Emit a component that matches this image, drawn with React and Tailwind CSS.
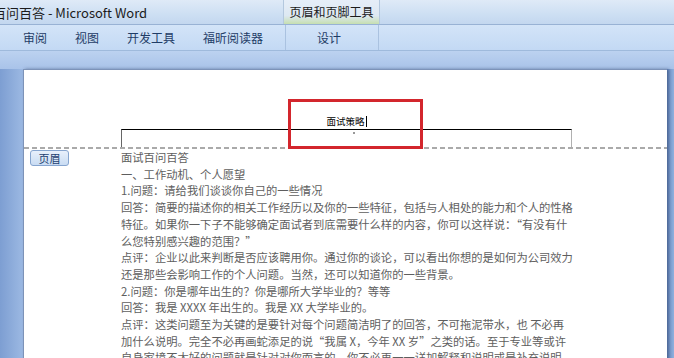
import React from "react";

const lines = [
  "面试百问百答",
  "一、工作动机、个人愿望",
  "1.问题：请给我们谈谈你自己的一些情况",
  "回答：简要的描述你的相关工作经历以及你的一些特征，包括与人相处的能力和个人的性格",
  "特征。如果你一下子不能够确定面试者到底需要什么样的内容，你可以这样说：“有没有什",
  "么您特别感兴趣的范围？”",
  "点评：企业以此来判断是否应该聘用你。通过你的谈论，可以看出你想的是如何为公司效力",
  "还是那些会影响工作的个人问题。当然，还可以知道你的一些背景。",
  "2.问题：你是哪年出生的？你是哪所大学毕业的？等等",
  "回答：我是 XXXX 年出生的。我是 XX 大学毕业的。",
  "点评：这类问题至为关键的是要针对每个问题简洁明了的回答，不可拖泥带水，也 不必再",
  "加什么说明。完全不必再画蛇添足的说“我属 X，今年 XX 岁”之类的话。至于专业等或许",
  "自身家境不太好的问题就是针对对你而言的，你不必再一一详加解释和说明或是补充说明。",
];

export default function App() {
  return (
    <div
      className="w-[674px] h-[358px] overflow-hidden flex flex-col bg-[#a3bfe6]"
      style={{ fontFamily: '"Noto Sans CJK SC", "Noto Sans", sans-serif' }}
    >
      {/* Title bar */}
      <div className="h-[25px] flex shrink-0 bg-[linear-gradient(to_bottom,#dfeaf7,#cddff3_60%,#c3d7ef)] border-b border-[#98b2d4]">
        <div className="w-[283px] overflow-hidden flex items-center">
          <span className="-ml-[33px] text-[13px] leading-none text-[#1b1b1b] whitespace-nowrap">
            面试百问百答 - Microsoft Word
          </span>
        </div>
        <div className="w-[97px] flex items-center justify-center text-[12px] text-[#1b1b1b] bg-[linear-gradient(to_bottom,#e6eef8,#dde8f2_65%,#c6dfb0)] border-l border-r border-[#b4c8de]">
          页眉和页脚工具
        </div>
        <div className="flex-1" />
      </div>

      {/* Ribbon tabs */}
      <div className="h-[26px] flex items-center shrink-0 bg-[linear-gradient(to_bottom,#d3e4f8,#c3d9f4)] border-b border-[#9fbadc] text-[12px] text-[#1f3c66]">
        <span className="ml-[23px] w-[24px] text-center">审阅</span>
        <span className="ml-[28px] w-[24px] text-center">视图</span>
        <span className="ml-[28px] w-[48px] text-center">开发工具</span>
        <span className="ml-[28px] w-[60px] text-center">福昕阅读器</span>
        <span className="ml-[22px] w-px h-full bg-[#aac2e0]" />
        <span className="ml-[31px] w-[24px] text-center">设计</span>
        <span className="ml-[37px] w-px h-full bg-[#aac2e0]" />
      </div>

      {/* Document area */}
      <div className="flex-1 flex flex-col">
        <div className="h-[18px] shrink-0 bg-[linear-gradient(to_bottom,#bcd2f0,#a9c3e9)]" />
        <div className="flex-1 flex">
          <div className="w-[23px] bg-[linear-gradient(to_right,#7d9ed2,#9cb9e3)]" />
          <div className="w-[644px] bg-white relative border-t border-l border-[#7d93b8] shadow-[2px_0_3px_rgba(40,60,100,0.5)]">
            {/* Header area */}
            <div className="h-[77px] pt-[44px]">
              <div className="ml-[97px] w-[451px]">
                <div className="h-[15px] flex items-center justify-center text-[9.5px] leading-none text-black">
                  <span>面试策略</span>
                  <span className="inline-block w-px h-[11px] bg-black ml-[1px]" />
                </div>
                <div className="h-[18px] border-t border-black border-l border-l-[#666] border-r border-r-[#b0b0b0] relative">
                  <span className="absolute left-[231px] top-[2px] w-[2px] h-[2px] bg-[#777] rounded-full" />
                </div>
              </div>
            </div>
            {/* Dashed separator */}
            <div className="h-[2px] bg-[repeating-linear-gradient(to_right,#aaaaaa_0px,#aaaaaa_5px,transparent_5px,transparent_8px)]" />

            {/* Body */}
            <div className="pl-[97px] text-[11.3px] leading-[16.7px] text-[#5e5e5e] whitespace-nowrap">
              {lines.map((l, i) => (
                <div key={i}>{l}</div>
              ))}
            </div>

            {/* Red annotation box */}
            <div className="absolute left-[264px] top-[29px] w-[135px] h-[50px] border-[3px] border-[#d3262d]" />

            {/* Header tag */}
            <div className="absolute left-[6px] top-[80px] w-[39px] h-[16px] flex items-center justify-center rounded-[3px] border border-[#86a5cf] bg-[linear-gradient(to_bottom,#e8f0fb,#c9dcf3)] text-[11px] leading-none text-[#1e3f70]">
              页眉
            </div>
          </div>
          <div className="flex-1 bg-[linear-gradient(to_right,#6e90c6,#8fb0dd)]" />
        </div>
      </div>
    </div>
  );
}
